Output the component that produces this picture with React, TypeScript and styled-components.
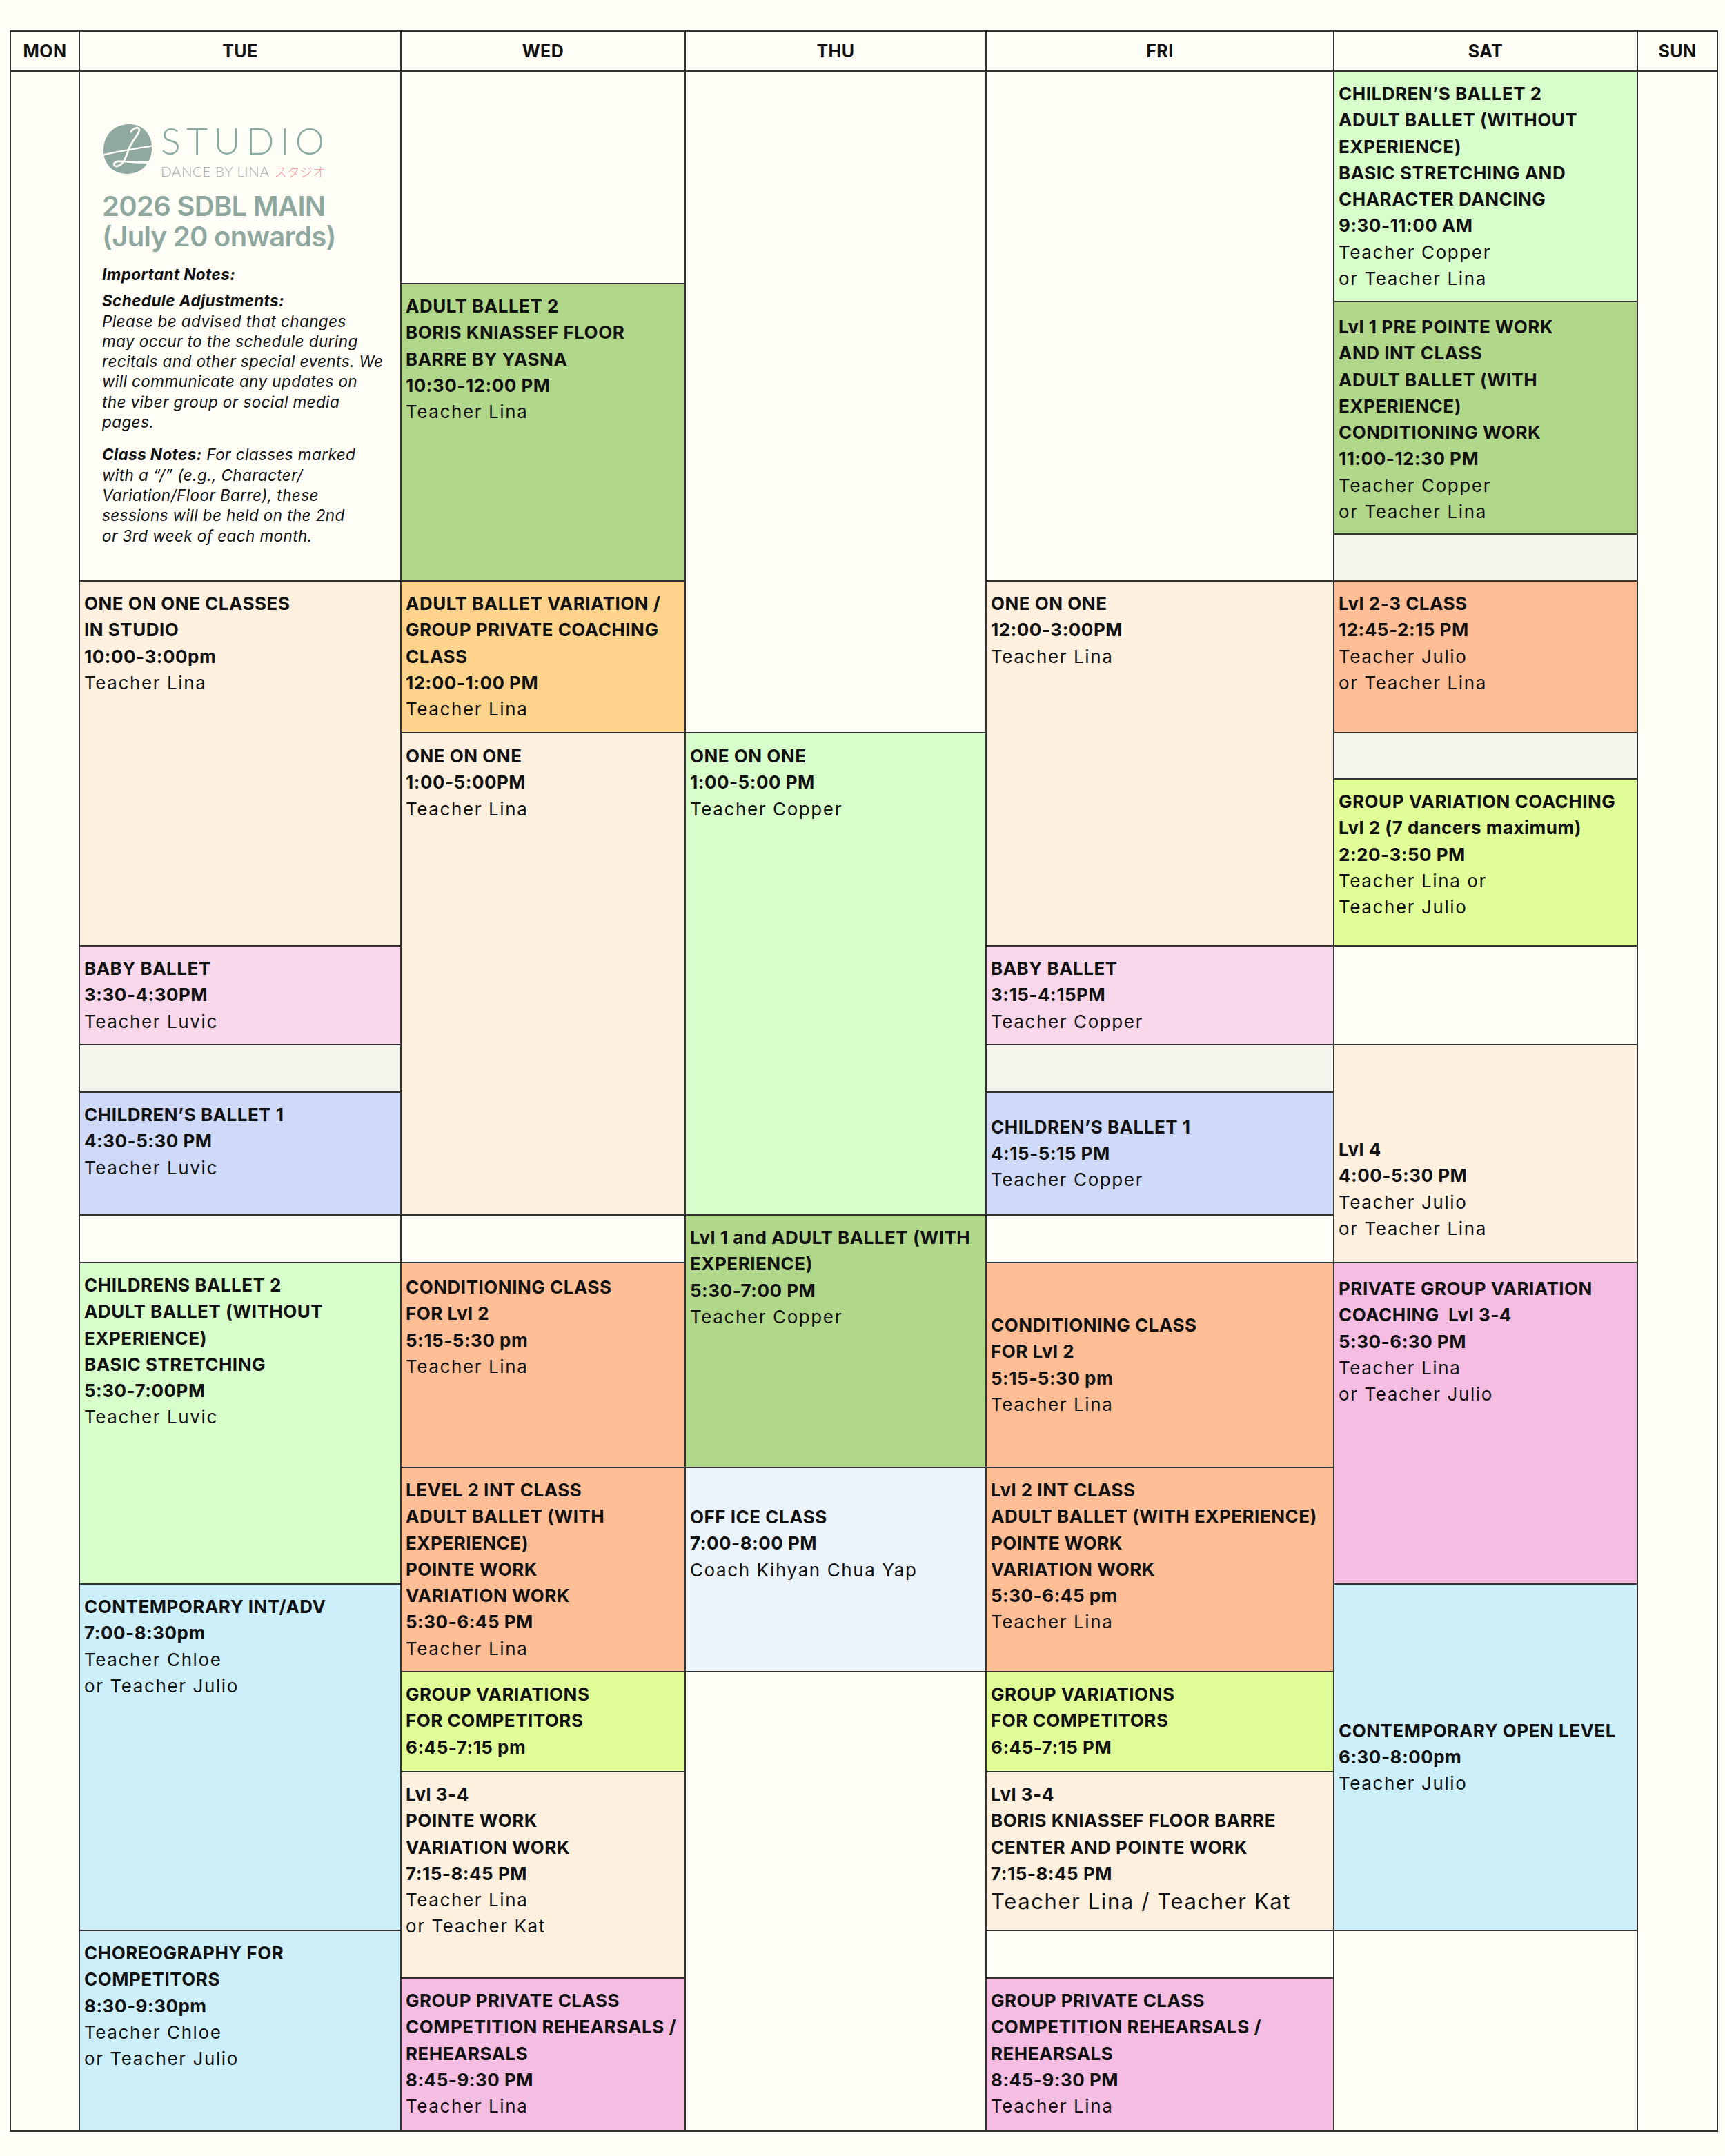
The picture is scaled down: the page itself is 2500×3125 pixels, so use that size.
import React from 'react'
import styled, { createGlobalStyle } from 'styled-components'

const GlobalStyle = createGlobalStyle`
  * { box-sizing: border-box; }
  body {
    margin: 0;
    background: #fefef7;
  }
`

// body row heights, measured from the printed schedule
const ROWS = [308, 26, 337, 68, 220, 67, 242, 143, 69, 178, 69, 297, 169, 127, 145, 230, 69, 222]

const C = {
  page: '#fefef7',
  cream: '#fdf0df',
  pink: '#f9d7ea',
  gap: '#f5f5ee',
  lavender: '#cfdaf9',
  mint: '#d7fdca',
  green: '#b1d78b',
  orange: '#fed38c',
  salmon: '#ffbe96',
  lime: '#e0fd97',
  rose: '#f5bde2',
  sky: '#cdeffa',
  ice: '#eaf3f9',
}

const Page = styled.div`
  width: 2500px;
  min-height: 3125px;
  padding: 44px 0 0 14px;
  background: ${C.page};
  font-family: Inter, 'Noto Sans', sans-serif;
  color: #111;
`

const Schedule = styled.div`
  display: grid;
  width: 2476px;
  grid-template-columns: 100px 466px 412px 436px 504px 440px 116px;
  grid-template-rows: 58px ${ROWS.map(r => `${r}px`).join(' ')};
  border-top: 2px solid #333;
  border-left: 2px solid #333;
`

const HeaderCell = styled.div`
  display: flex;
  align-items: center;
  justify-content: center;
  border-right: 2px solid #333;
  border-bottom: 2px solid #333;
  font-size: 25px;
  font-weight: 700;
  letter-spacing: 0.5px;
`

const Slot = styled.div<{ $col: number; $from: number; $to: number; $bg: string; $center?: boolean; $pt?: number }>`
  grid-column: ${p => p.$col};
  grid-row: ${p => p.$from} / ${p => p.$to};
  background: ${p => p.$bg};
  border-right: 2px solid #333;
  border-bottom: 2px solid #333;
  padding: ${p => (p.$center ? 0 : p.$pt ?? 13)}px 8px 0 6px;
  display: flex;
  flex-direction: column;
  justify-content: ${p => (p.$center ? 'center' : 'flex-start')};
  overflow: hidden;
`

const ClassTitle = styled.div`
  font-size: 26px;
  line-height: 38.3px;
  font-weight: 700;
  letter-spacing: 0.5px;
  white-space: nowrap;
`

const Teacher = styled.div<{ $big?: boolean }>`
  font-size: ${p => (p.$big ? 31 : 26)}px;
  line-height: ${p => (p.$big ? 41 : 38.3)}px;
  font-weight: 400;
  letter-spacing: 1.6px;
  white-space: nowrap;
`

/* intro cell */
const IntroCell = styled.div`
  grid-column: 2;
  grid-row: 2 / 6;
  border-right: 2px solid #333;
  border-bottom: 2px solid #333;
  padding: 67px 0 0 32px;
`

const LogoRow = styled.div`
  display: flex;
  align-items: flex-start;
  gap: 11px;
  svg { margin-top: 7px; }
`

const LogoWords = styled.div`
  display: flex;
  flex-direction: column;
  font-family: Lato, sans-serif;
`

const Studio = styled.div`
  font-size: 54px;
  line-height: 65px;
  font-weight: 300;
  letter-spacing: 8px;
  color: #8aaba3;
`

const SubLine = styled.div`
  display: flex;
  gap: 7px;
  font-size: 20.5px;
  line-height: 25px;
  font-weight: 300;
  letter-spacing: 0.6px;
  color: #a8a8a8;
  span {
    font-family: 'Noto Sans CJK JP', sans-serif;
    font-size: 18.5px;
    line-height: 25px;
    color: #f79aa2;
    letter-spacing: 0;
  }
`

const Title = styled.div`
  margin-top: 16px;
  font-size: 40px;
  line-height: 44px;
  font-weight: 600;
  letter-spacing: -0.7px;
  color: #8ea89f;
  white-space: nowrap;
`

const Notes = styled.div`
  margin-top: 18px;
  font-size: 22.5px;
  line-height: 29.3px;
  font-style: italic;
  letter-spacing: 0.4px;
  white-space: nowrap;
`

const NotePara = styled.div<{ $gap?: number }>`
  margin-top: ${p => p.$gap ?? 0}px;
  b { font-weight: 700; }
`

const LogoMark = () => (
  <svg width="74" height="76" viewBox="0 0 78 80">
    <path
      d="M40 2 C62 1 77 18 76 40 C75 62 60 78 38 78 C16 78 1 62 2 40 C3 18 18 3 40 2 Z"
      fill="#8fa9a0"
    />
    <path d="M2 49 C22 44 48 40 77 35" stroke="#fefef7" strokeWidth="2.4" fill="none" />
    <path
      d="M44 14 C50 5 60 6 56 14 C52 22 44 30 40 42 C36 54 32 64 24 66 C17 68 15 60 24 59 C36 58 56 62 76 60"
      stroke="#fefef7"
      strokeWidth="3"
      fill="none"
      strokeLinecap="round"
    />
  </svg>
)

type Entry = {
  col: number
  from: number
  to: number
  bg: string
  title?: string[]
  who?: string[]
  center?: boolean
  pt?: number
  big?: boolean
}

const entries: Entry[] = [
  // MON
  { col: 1, from: 2, to: 20, bg: C.page },
  // TUE
  { col: 2, from: 6, to: 9, bg: C.cream, title: ['ONE ON ONE CLASSES', 'IN STUDIO', '10:00-3:00pm'], who: ['Teacher Lina'] },
  { col: 2, from: 9, to: 10, bg: C.pink, title: ['BABY BALLET', '3:30-4:30PM'], who: ['Teacher Luvic'] },
  { col: 2, from: 10, to: 11, bg: C.gap },
  { col: 2, from: 11, to: 12, bg: C.lavender, title: ['CHILDREN\u2019S BALLET 1', '4:30-5:30 PM'], who: ['Teacher Luvic'] },
  { col: 2, from: 12, to: 13, bg: C.page },
  {
    col: 2, from: 13, to: 15, bg: C.mint,
    title: ['CHILDRENS BALLET 2', 'ADULT BALLET (WITHOUT', 'EXPERIENCE)', 'BASIC STRETCHING', '5:30-7:00PM'],
    who: ['Teacher Luvic'],
  },
  { col: 2, from: 15, to: 18, bg: C.sky, title: ['CONTEMPORARY INT/ADV', '7:00-8:30pm'], who: ['Teacher Chloe', 'or Teacher Julio'] },
  { col: 2, from: 18, to: 20, bg: C.sky, title: ['CHOREOGRAPHY FOR', 'COMPETITORS', '8:30-9:30pm'], who: ['Teacher Chloe', 'or Teacher Julio'] },
  // WED
  { col: 3, from: 2, to: 3, bg: C.page },
  {
    col: 3, from: 3, to: 6, bg: C.green,
    title: ['ADULT BALLET 2', 'BORIS KNIASSEF FLOOR', 'BARRE BY YASNA', '10:30-12:00 PM'],
    who: ['Teacher Lina'],
  },
  {
    col: 3, from: 6, to: 7, bg: C.orange,
    title: ['ADULT BALLET VARIATION /', 'GROUP PRIVATE COACHING', 'CLASS', '12:00-1:00 PM'],
    who: ['Teacher Lina'],
  },
  { col: 3, from: 7, to: 12, bg: C.cream, title: ['ONE ON ONE', '1:00-5:00PM'], who: ['Teacher Lina'], pt: 14 },
  { col: 3, from: 12, to: 13, bg: C.page },
  { col: 3, from: 13, to: 14, bg: C.salmon, title: ['CONDITIONING CLASS', 'FOR Lvl 2', '5:15-5:30 pm'], who: ['Teacher Lina'], pt: 16 },
  {
    col: 3, from: 14, to: 16, bg: C.salmon,
    title: ['LEVEL 2 INT CLASS', 'ADULT BALLET (WITH', 'EXPERIENCE)', 'POINTE WORK', 'VARIATION WORK', '5:30-6:45 PM'],
    who: ['Teacher Lina'],
  },
  { col: 3, from: 16, to: 17, bg: C.lime, title: ['GROUP VARIATIONS', 'FOR COMPETITORS', '6:45-7:15 pm'] },
  {
    col: 3, from: 17, to: 19, bg: C.cream,
    title: ['Lvl 3-4', 'POINTE WORK', 'VARIATION WORK', '7:15-8:45 PM'],
    who: ['Teacher Lina', 'or Teacher Kat'],
  },
  {
    col: 3, from: 19, to: 20, bg: C.rose,
    title: ['GROUP PRIVATE CLASS', 'COMPETITION REHEARSALS /', 'REHEARSALS', '8:45-9:30 PM'],
    who: ['Teacher Lina'],
  },
  // THU
  { col: 4, from: 2, to: 7, bg: C.page },
  { col: 4, from: 7, to: 12, bg: C.mint, title: ['ONE ON ONE', '1:00-5:00 PM'], who: ['Teacher Copper'], pt: 14 },
  {
    col: 4, from: 12, to: 14, bg: C.green,
    title: ['Lvl 1 and ADULT BALLET (WITH', 'EXPERIENCE)', '5:30-7:00 PM'],
    who: ['Teacher Copper'],
  },
  { col: 4, from: 14, to: 16, bg: C.ice, title: ['OFF ICE CLASS', '7:00-8:00 PM'], who: ['Coach Kihyan Chua Yap'], pt: 52 },
  { col: 4, from: 16, to: 20, bg: C.page },
  // FRI
  { col: 5, from: 2, to: 6, bg: C.page },
  { col: 5, from: 6, to: 9, bg: C.cream, title: ['ONE ON ONE', '12:00-3:00PM'], who: ['Teacher Lina'] },
  { col: 5, from: 9, to: 10, bg: C.pink, title: ['BABY BALLET', '3:15-4:15PM'], who: ['Teacher Copper'] },
  { col: 5, from: 10, to: 11, bg: C.gap },
  { col: 5, from: 11, to: 12, bg: C.lavender, title: ['CHILDREN\u2019S BALLET 1', '4:15-5:15 PM'], who: ['Teacher Copper'], center: true },
  { col: 5, from: 12, to: 13, bg: C.page },
  { col: 5, from: 13, to: 14, bg: C.salmon, title: ['CONDITIONING CLASS', 'FOR Lvl 2', '5:15-5:30 pm'], who: ['Teacher Lina'], center: true },
  {
    col: 5, from: 14, to: 16, bg: C.salmon,
    title: ['Lvl 2 INT CLASS', 'ADULT BALLET (WITH EXPERIENCE)', 'POINTE WORK', 'VARIATION WORK', '5:30-6:45 pm'],
    who: ['Teacher Lina'],
  },
  { col: 5, from: 16, to: 17, bg: C.lime, title: ['GROUP VARIATIONS', 'FOR COMPETITORS', '6:45-7:15 PM'] },
  {
    col: 5, from: 17, to: 18, bg: C.cream,
    title: ['Lvl 3-4', 'BORIS KNIASSEF FLOOR BARRE', 'CENTER AND POINTE WORK', '7:15-8:45 PM'],
    who: ['Teacher Lina / Teacher Kat'],
    big: true,
  },
  { col: 5, from: 18, to: 19, bg: C.page },
  {
    col: 5, from: 19, to: 20, bg: C.rose,
    title: ['GROUP PRIVATE CLASS', 'COMPETITION REHEARSALS /', 'REHEARSALS', '8:45-9:30 PM'],
    who: ['Teacher Lina'],
  },
  // SAT
  {
    col: 6, from: 2, to: 4, bg: C.mint,
    title: ['CHILDREN\u2019S BALLET 2', 'ADULT BALLET (WITHOUT', 'EXPERIENCE)', 'BASIC STRETCHING AND', 'CHARACTER DANCING', '9:30-11:00 AM'],
    who: ['Teacher Copper', 'or Teacher Lina'],
  },
  {
    col: 6, from: 4, to: 5, bg: C.green,
    title: ['Lvl 1 PRE POINTE WORK', 'AND INT CLASS', 'ADULT BALLET (WITH', 'EXPERIENCE)', 'CONDITIONING WORK', '11:00-12:30 PM'],
    who: ['Teacher Copper', 'or Teacher Lina'],
    pt: 17,
  },
  { col: 6, from: 5, to: 6, bg: C.gap },
  { col: 6, from: 6, to: 7, bg: C.salmon, title: ['Lvl 2-3 CLASS', '12:45-2:15 PM'], who: ['Teacher Julio', 'or Teacher Lina'] },
  { col: 6, from: 7, to: 8, bg: C.gap },
  {
    col: 6, from: 8, to: 9, bg: C.lime,
    title: ['GROUP VARIATION COACHING', 'Lvl 2 (7 dancers maximum)', '2:20-3:50 PM'],
    who: ['Teacher Lina or', 'Teacher Julio'],
  },
  { col: 6, from: 9, to: 10, bg: C.page },
  { col: 6, from: 10, to: 13, bg: C.cream, title: ['Lvl 4', '4:00-5:30 PM'], who: ['Teacher Julio', 'or Teacher Lina'], pt: 132 },
  {
    col: 6, from: 13, to: 15, bg: C.rose,
    title: ['PRIVATE GROUP VARIATION', 'COACHING\u00a0 Lvl 3-4', '5:30-6:30 PM'],
    who: ['Teacher Lina', 'or Teacher Julio'],
    pt: 18,
  },
  { col: 6, from: 15, to: 18, bg: C.sky, title: ['CONTEMPORARY OPEN LEVEL', '6:30-8:00pm'], who: ['Teacher Julio'], center: true },
  { col: 6, from: 18, to: 20, bg: C.page },
  // SUN
  { col: 7, from: 2, to: 20, bg: C.page },
]

const DAYS = ['MON', 'TUE', 'WED', 'THU', 'FRI', 'SAT', 'SUN']

const Intro = () => (
  <IntroCell>
    <LogoRow>
      <LogoMark />
      <LogoWords>
        <Studio>STUDIO</Studio>
        <SubLine>
          DANCE BY LINA <span>スタジオ</span>
        </SubLine>
      </LogoWords>
    </LogoRow>
    <Title>
      2026 SDBL MAIN
      <br />
      (July 20 onwards)
    </Title>
    <Notes>
      <NotePara>
        <b>Important Notes:</b>
      </NotePara>
      <NotePara $gap={9}>
        <b>Schedule Adjustments:</b>
        <br />
        Please be advised that changes
        <br />
        may occur to the schedule during
        <br />
        recitals and other special events. We
        <br />
        will communicate any updates on
        <br />
        the viber group or social media
        <br />
        pages.
      </NotePara>
      <NotePara $gap={18}>
        <b>Class Notes:</b> For classes marked
        <br />
        with a &ldquo;/&rdquo; (e.g., Character/
        <br />
        Variation/Floor Barre), these
        <br />
        sessions will be held on the 2nd
        <br />
        or 3rd week of each month.
      </NotePara>
    </Notes>
  </IntroCell>
)

export default function App() {
  return (
    <Page>
      <GlobalStyle />
      <Schedule>
        {DAYS.map(d => (
          <HeaderCell key={d}>{d}</HeaderCell>
        ))}
        <Intro />
        {entries.map((e, i) => (
          <Slot key={i} $col={e.col} $from={e.from} $to={e.to} $bg={e.bg} $center={e.center} $pt={e.pt}>
            {e.title?.map((t, j) => (
              <ClassTitle key={j}>{t}</ClassTitle>
            ))}
            {e.who?.map((w, j) => (
              <Teacher key={j} $big={e.big}>
                {w}
              </Teacher>
            ))}
          </Slot>
        ))}
      </Schedule>
    </Page>
  )
}
